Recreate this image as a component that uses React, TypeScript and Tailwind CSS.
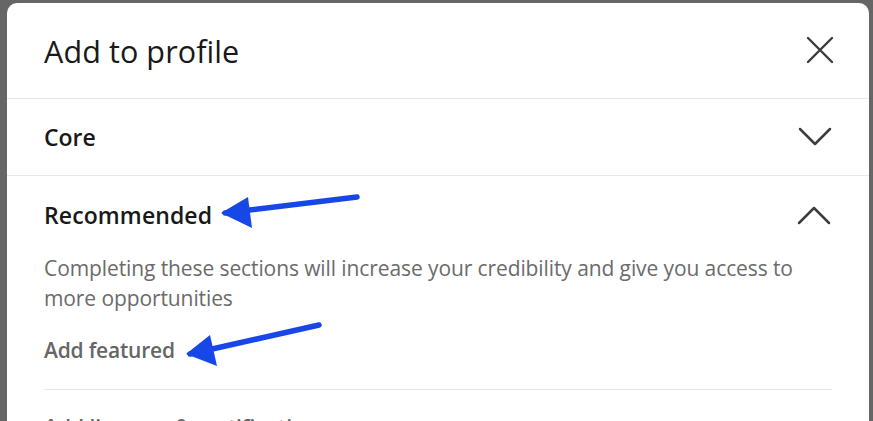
// Arrow overlay drawn on top of the dialog
function Arrow({ className, x1, y1, x2, y2, h1, h2 }: {
  className: string
  x1: number
  y1: number
  x2: number
  y2: number
  h1: [number, number]
  h2: [number, number]
}) {
  return (
    <svg className={className} width="873" height="421" viewBox="0 0 873 421">
      <line x1={x1} y1={y1} x2={x2} y2={y2} stroke="#1747e6" strokeWidth="5.5" strokeLinecap="round" />
      <polygon points={`${x2 - 4},${y2} ${h1[0]},${h1[1]} ${h2[0]},${h2[1]}`} fill="#1747e6" />
    </svg>
  )
}

function CloseIcon() {
  return (
    <svg width="28" height="28" viewBox="0 0 28 28" className="text-[#3d3d3d]">
      <path d="M2 2 L26 26 M26 2 L2 26" stroke="currentColor" strokeWidth="2.4" strokeLinecap="round" />
    </svg>
  )
}

function Chevron({ up }: { up?: boolean }) {
  return (
    <svg width="36" height="20" viewBox="0 0 36 20" className="text-[#3d3d3d]">
      <path
        d={up ? 'M3 18 L18 3 L33 18' : 'M3 2 L18 17 L33 2'}
        fill="none"
        stroke="currentColor"
        strokeWidth="2.5"
        strokeLinecap="round"
        strokeLinejoin="round"
      />
    </svg>
  )
}

export default function App() {
  return (
    <div
      className="relative w-[873px] h-[421px] overflow-hidden bg-[#666666] pt-[3px] pl-[7px] pr-[4px]"
      style={{ fontFamily: '"Open Sans", "Noto Sans", sans-serif' }}
    >
      <div className="h-[440px] bg-white rounded-t-[10px] flex flex-col">
        {/* header */}
        <div className="flex items-center justify-between h-[96px] pl-[37px] pr-[35px] border-b border-[#e8e8e8]">
          <h1 className="text-[30.5px] text-[#191919] pt-[4px] tracking-[0.1px]">Add to profile</h1>
          <CloseIcon />
        </div>

        {/* Core */}
        <div className="flex items-center justify-between h-[77px] pl-[37px] pr-[36px] border-b border-[#e8e8e8]">
          <span className="text-[23px] font-semibold text-[#191919] pt-[2px]">Core</span>
          <Chevron />
        </div>

        {/* Recommended */}
        <div className="pl-[37px] pr-[37px]">
          <div className="flex items-center justify-between h-[79px]">
            <span className="text-[23px] font-semibold text-[#191919] tracking-[0.1px]">Recommended</span>
            <Chevron up />
          </div>
          <p className="text-[21px] leading-[30px] text-[#6b6b6b] tracking-[-0.1px] -mt-[2px]">
            Completing these sections will increase your credibility and give you access to
            <br />
            more opportunities
          </p>
          <div className="h-[77px] flex items-center border-b border-[#e8e8e8]">
            <span className="text-[21px] font-semibold text-[#666666] tracking-[-0.2px]">Add featured</span>
          </div>
          <div className="pt-[22px] text-[21px] font-semibold text-[#666666]">Add licenses &amp; certifications</div>
        </div>
      </div>

      <Arrow className="absolute left-0 top-0 pointer-events-none" x1={357} y1={197} x2={225} y2={213} h1={[248, 197]} h2={[252, 228]} />
      <Arrow className="absolute left-0 top-0 pointer-events-none" x1={319} y1={325} x2={190} y2={354} h1={[210, 335]} h2={[217, 366]} />
    </div>
  )
}
